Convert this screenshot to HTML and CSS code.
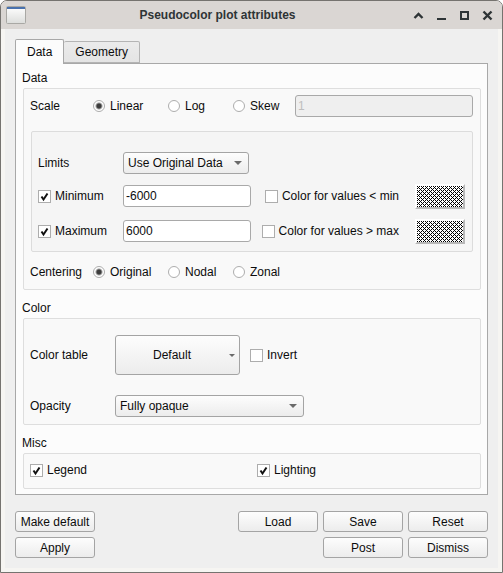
FILE: index.html
```html
<!DOCTYPE html>
<html lang="en">
<head>
<meta charset="utf-8">
<title>Pseudocolor plot attributes</title>
<link rel="stylesheet" href="styles.css">
</head>
<body>
<div class="window">
  <header class="titlebar">
    <svg class="app-icon" width="22" height="20" viewBox="0 0 22 20" aria-hidden="true">
      <defs><linearGradient id="ic" x1="0" y1="0" x2="0" y2="1"><stop offset="0" stop-color="#fff"/><stop offset="1" stop-color="#dcdddb"/></linearGradient></defs>
      <rect x="1.5" y="1.5" width="19" height="17" rx="1" fill="url(#ic)" stroke="#a9a8a4"/>
      <rect x="2" y="2" width="18" height="2" fill="#4a72ae"/>
    </svg>
    <h1 class="title">Pseudocolor plot attributes</h1>
    <div class="controls">
      <button class="control" aria-label="Shade"><svg width="11" height="11" viewBox="0 0 11 11"><path d="M1.5 8 5.5 4 9.5 8" fill="none" stroke="#2e3436" stroke-width="2.4"/></svg></button>
      <button class="control" aria-label="Minimize"><svg width="11" height="11" viewBox="0 0 11 11"><path d="M1 8h9v2H1z" fill="#2e3436"/></svg></button>
      <button class="control" aria-label="Maximize"><svg width="11" height="11" viewBox="0 0 11 11"><path d="M2 2h7v7H2z" fill="none" stroke="#2e3436" stroke-width="2"/></svg></button>
      <button class="control" aria-label="Close"><svg width="11" height="11" viewBox="0 0 11 11"><path d="M1.5 1.5l8 8M9.5 1.5l-8 8" fill="none" stroke="#2e3436" stroke-width="2.4"/></svg></button>
    </div>
  </header>
  <main class="content">
    <div class="tabs" role="tablist">
      <button class="tab tab-active" role="tab" aria-selected="true">Data</button>
      <button class="tab" role="tab" aria-selected="false">Geometry</button>
    </div>
    <form class="panel">
      <h2 class="heading">Data</h2>
      <section class="group data-group">
        <div class="choices">
          <span>Scale</span>
          <label class="option"><input type="radio" name="scale" checked>Linear</label>
          <label class="option"><input type="radio" name="scale">Log</label>
          <label class="option"><input type="radio" name="scale">Skew</label>
          <input class="field" type="text" value="1" aria-label="Skew factor" disabled>
        </div>
        <div class="limits">
          <div class="limit-row">
            <label for="limits">Limits</label>
            <span class="drop"><select id="limits"><option>Use Original Data</option></select></span>
          </div>
          <div class="limit-row">
            <label class="option"><input type="checkbox" checked>Minimum</label>
            <input class="field" type="text" value="-6000" aria-label="Minimum value">
            <label class="option color-option"><input type="checkbox">Color for values &lt; min</label>
            <button type="button" class="swatch" aria-label="Below minimum color"></button>
          </div>
          <div class="limit-row">
            <label class="option"><input type="checkbox" checked>Maximum</label>
            <input class="field" type="text" value="6000" aria-label="Maximum value">
            <label class="option color-option"><input type="checkbox">Color for values &gt; max</label>
            <button type="button" class="swatch" aria-label="Above maximum color"></button>
          </div>
        </div>
        <div class="choices">
          <span>Centering</span>
          <label class="option"><input type="radio" name="centering" checked>Original</label>
          <label class="option"><input type="radio" name="centering">Nodal</label>
          <label class="option"><input type="radio" name="centering">Zonal</label>
        </div>
      </section>
      <h2 class="heading">Color</h2>
      <section class="group color-group">
        <div class="color-row">
          <span>Color table</span>
          <button type="button" class="button table-button">Default</button>
          <label class="option"><input type="checkbox">Invert</label>
        </div>
        <div class="color-row">
          <label for="opacity">Opacity</label>
          <span class="drop drop-wide"><select id="opacity"><option>Fully opaque</option></select></span>
        </div>
      </section>
      <h2 class="heading">Misc</h2>
      <section class="group misc-group">
        <label class="option"><input type="checkbox" checked>Legend</label>
        <label class="option"><input type="checkbox" checked>Lighting</label>
      </section>
    </form>
    <footer class="actions">
      <button class="button">Make default</button>
      <button class="button load">Load</button>
      <button class="button">Save</button>
      <button class="button">Reset</button>
      <button class="button">Apply</button>
      <button class="button post">Post</button>
      <button class="button">Dismiss</button>
    </footer>
  </main>
</div>
</body>
</html>
```

FILE: styles.css
```css
* { box-sizing: border-box; }

body {
  margin: 0;
  background: #fff;
  color: #0c0c0c;
  font: 12px/16px "Liberation Sans", Arial, sans-serif;
}

button, input, select { margin: 0; font: inherit; color: inherit; }

.window {
  border: 1px solid #75736f;
  border-radius: 7px 7px 0 0;
  background: #f6f5f2;
  overflow: hidden;
}

.titlebar {
  display: grid;
  grid-template-columns: 22px 1fr 90px;
  align-items: center;
  height: 28px;
  padding: 0 4px;
  background: #dad6d3;
}

.app-icon { display: block; }

.title {
  margin: 0;
  font-size: 12px;
  font-weight: bold;
  text-align: center;
  color: #2e3436;
}

.controls { display: flex; justify-content: flex-end; gap: 12px; padding-right: 5px; }
.control { display: block; width: 11px; height: 11px; padding: 0; border: 0; background: none; }
.control svg { display: block; }

.content {
  margin: 0 4px 4px;
  padding: 10px;
  background: #efefef;
}

.tabs { display: flex; align-items: flex-end; }

.tab {
  height: 22px;
  padding: 0 11px;
  border: 1px solid #b4b4b4;
  border-left: 0;
  border-radius: 2px 2px 0 0;
  background: linear-gradient(#ebebeb, #e4e4e4);
}

.tab-active {
  position: relative;
  height: 25px;
  margin-bottom: -1px;
  border: 1px solid #a8a8a8;
  border-bottom: 0;
  background: #fcfcfc;
}

.panel {
  padding: 6px 6px 5px 7px;
  border: 1px solid #a8a8a8;
  background: #fcfcfc;
}

.heading { margin: 0 -1px; font-size: 12px; font-weight: normal; }

.group {
  margin: 2px 0 10px;
  border: 1px solid #dedede;
  border-radius: 2px;
  background: #f9f9f9;
}

.option { display: flex; align-items: center; gap: 5px; white-space: nowrap; }

.option input {
  flex: none;
  width: 12px;
  height: 12px;
  appearance: none;
  border: 1px solid #adadad;
  background: #fff;
}

.option input[type="radio"] { border-radius: 50%; }
.option input[type="radio"]:checked { background: radial-gradient(circle, #3c3c3c 2px, #fff 4px); }

.option input[type="checkbox"] { width: 13px; height: 13px; margin-right: -1px; }
.option input[type="checkbox"]:checked {
  background: #fff url("data:image/svg+xml,%3Csvg xmlns='http://www.w3.org/2000/svg' viewBox='0 0 11 11'%3E%3Cpath d='M2.5 5.5 4.5 8.5 8.5 2.5' fill='none' stroke='%23111' stroke-width='2'/%3E%3C/svg%3E");
}

.data-group { padding: 6px 7px; }

.choices {
  display: grid;
  grid-template-columns: 63px 75px 65px 62px 1fr;
  align-items: center;
  height: 22px;
  margin-left: -1px;
}

.field {
  width: 100%;
  min-width: 0;
  height: 22px;
  padding: 0 2px;
  border: 1px solid #a9a9a9;
  border-radius: 3px;
  background: #fff;
}

.field:disabled { background: #efefef; color: #bebebe; }

.limits {
  display: grid;
  row-gap: 10px;
  margin: 14px 0 9px;
  padding: 20px 7px 7px 6px;
  border: 1px solid #dcdcdc;
  border-radius: 2px;
  background: #f5f5f5;
}

.limit-row {
  display: grid;
  grid-template-columns: 85px 128px 1fr 50px;
  align-items: center;
  height: 25px;
  padding-bottom: 1px;
}

.limit-row:first-child { height: 22px; padding: 0; }
.color-option { justify-self: end; margin-right: 16px; }

.drop { position: relative; display: block; width: 126px; }
.drop-wide { width: 189px; }

.drop select {
  display: block;
  width: 100%;
  height: 22px;
  padding: 0 4px;
  appearance: none;
  border: 1px solid #a4a4a4;
  border-radius: 3px;
  background: linear-gradient(#fdfdfd, #ececec);
}

.drop::after, .table-button::after {
  content: "";
  position: absolute;
  top: 9px;
  right: 7px;
  border: 4px solid transparent;
  border-top-color: #6a6a6a;
  border-bottom: 0;
}

.swatch {
  height: 25px;
  margin-bottom: -1px;
  padding: 0;
  border: 2px solid;
  border-color: #fff #b8b8b8 #b8b8b8 #fff;
  background: #fff url("data:image/svg+xml,%3Csvg xmlns='http://www.w3.org/2000/svg' width='4' height='4' shape-rendering='crispEdges'%3E%3Cpath d='M0 0h1v1H0zM2 0h1v1H2zM1 1h1v1H1zM0 2h1v1H0zM2 2h1v1H2zM3 3h1v1H3z'/%3E%3C/svg%3E") 0 0 / 4px 4px;
}

.button {
  height: 21px;
  padding: 0 4px;
  border: 1px solid #a4a4a4;
  border-radius: 3px;
  background: linear-gradient(#fdfdfd, #ececec);
  white-space: nowrap;
}

.color-group { padding: 16px 6px 7px; }
.color-row { display: grid; grid-template-columns: 85px 125px 1fr; align-items: center; }
.color-row + .color-row { margin-top: 20px; }
.color-row .option { margin-left: 10px; }

.table-button { position: relative; height: 40px; padding-right: 15px; }
.table-button::after { top: 18px; right: 4px; border-width: 3px 3px 0; }

.misc-group {
  display: grid;
  grid-template-columns: 1fr 1fr;
  column-gap: 10px;
  margin-bottom: 0;
  padding: 8px 6px 10px;
}

.actions {
  display: grid;
  grid-template-columns: 80px 1fr 80px 80px 80px;
  gap: 5px;
  margin-top: 16px;
}

.load { grid-column: 3; }
.post { grid-column: 4; }
```
